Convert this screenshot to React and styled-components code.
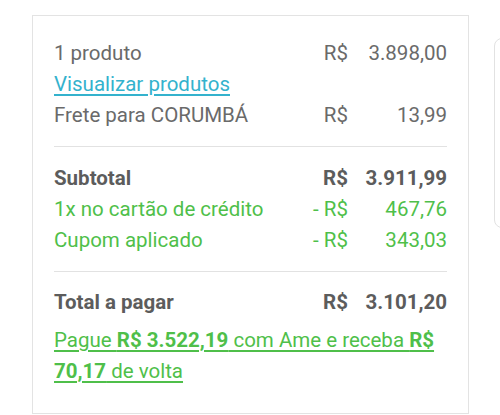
import React from "react";
import styled, { createGlobalStyle } from "styled-components";

const Global = createGlobalStyle`
  html, body { margin: 0; padding: 0; background: #fff; overflow: hidden; }
  body { font-family: Roboto, "Liberation Sans", Arial, sans-serif; }
`;

const Page = styled.div`
  display: flex;
  align-items: flex-start;
  gap: 25px;
  padding: 15px 0 0 32px;
  width: 500px;
  height: 415px;
  box-sizing: border-box;
  overflow: hidden;
`;

const Card = styled.div`
  flex: 0 0 437px;
  height: 399px;
  box-sizing: border-box;
  border: 1px solid #e3e3e3;
  padding: 21px 21px 0 21px;
  background: #fff;
`;

const SideCard = styled.div`
  flex: 0 0 60px;
  margin-top: 23px;
  height: 190px;
  box-sizing: border-box;
  border: 1px solid #e2e2e2;
  border-radius: 8px;
  background: #fff;
`;

const Section = styled.div`
  display: flex;
  flex-direction: column;
`;

const Row = styled.div`
  display: flex;
  align-items: center;
  height: 31px;
  font-size: 20.5px;
  color: ${(p) => (p.$green ? "#4fbf4a" : p.$strong ? "#5c5c5c" : "#6a6a6a")};
  font-weight: ${(p) => (p.$strong ? 700 : 400)};
`;

const Label = styled.span`
  flex: 1;
  white-space: nowrap;
`;

const Currency = styled.span`
  text-align: right;
  white-space: nowrap;
`;

const Value = styled.span`
  width: 99px;
  text-align: right;
  white-space: nowrap;
`;

const Link = styled.a`
  color: #34b2cd;
  text-decoration: underline;
  text-decoration-thickness: 2px;
  text-underline-offset: 3px;
  cursor: pointer;
`;

const Divider = styled.hr`
  border: none;
  border-top: 1px solid #e2e2e2;
  margin: ${(p) => p.$top}px 0 ${(p) => p.$bottom}px 0;
`;

const Promo = styled.p`
  margin: 8px 0 0 0;
  font-size: 20.5px;
  line-height: 31px;
  color: #4fbf4a;
  text-decoration: underline;
  text-decoration-thickness: 2px;
  text-underline-offset: 3px;
  b { font-weight: 700; }
`;

export default function App() {
  return (
    <>
      <Global />
      <Page>
        <Card>
          <Section>
            <Row>
              <Label>1 produto</Label>
              <Currency>R$</Currency>
              <Value>3.898,00</Value>
            </Row>
            <Row>
              <Label>
                <Link>Visualizar produtos</Link>
              </Label>
            </Row>
            <Row>
              <Label>Frete para CORUMBÁ</Label>
              <Currency>R$</Currency>
              <Value>13,99</Value>
            </Row>
          </Section>
          <Divider $top={16} $bottom={15} />
          <Section>
            <Row $strong>
              <Label>Subtotal</Label>
              <Currency>R$</Currency>
              <Value>3.911,99</Value>
            </Row>
            <Row $green>
              <Label>1x no cartão de crédito</Label>
              <Currency>- R$</Currency>
              <Value>467,76</Value>
            </Row>
            <Row $green>
              <Label>Cupom aplicado</Label>
              <Currency>- R$</Currency>
              <Value>343,03</Value>
            </Row>
          </Section>
          <Divider $top={16} $bottom={14} />
          <Section>
            <Row $strong>
              <Label>Total a pagar</Label>
              <Currency>R$</Currency>
              <Value>3.101,20</Value>
            </Row>
            <Promo>
              Pague <b>R$ 3.522,19</b> com Ame e receba <b>R$ 70,17</b> de volta
            </Promo>
          </Section>
        </Card>
        <SideCard />
      </Page>
    </>
  );
}
